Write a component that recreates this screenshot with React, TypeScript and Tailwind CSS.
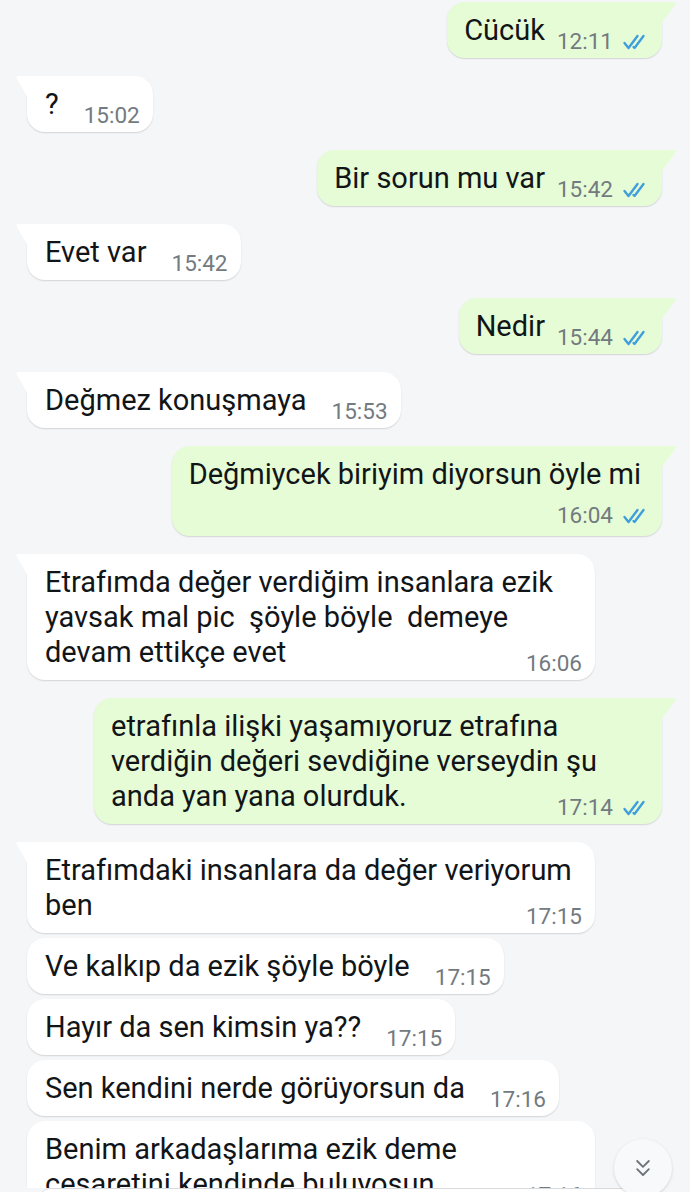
import React from 'react';
import { ChevronsDown } from 'lucide-react';

interface Message {
  out: boolean;
  lines: string[];
  time: string;
  tail: boolean;
  wide?: boolean;
  timeRow?: boolean;
}

const messages: Message[] = [
  { out: true, lines: ['Cücük'], time: '12:11', tail: true },
  { out: false, lines: ['?'], time: '15:02', tail: true },
  { out: true, lines: ['Bir sorun mu var'], time: '15:42', tail: true },
  { out: false, lines: ['Evet var'], time: '15:42', tail: true },
  { out: true, lines: ['Nedir'], time: '15:44', tail: true },
  { out: false, lines: ['Değmez konuşmaya'], time: '15:53', tail: true },
  { out: true, lines: ['Değmiycek biriyim diyorsun öyle mi'], time: '16:04', tail: true, timeRow: true },
  {
    out: false,
    lines: ['Etrafımda değer verdiğim insanlara ezik', 'yavsak mal pic\u00a0 şöyle böyle\u00a0 demeye', 'devam ettikçe evet'],
    time: '16:06',
    tail: true,
    wide: true,
  },
  {
    out: true,
    lines: ['etrafınla ilişki yaşamıyoruz etrafına', 'verdiğin değeri sevdiğine verseydin şu', 'anda yan yana olurduk.'],
    time: '17:14',
    tail: true,
    wide: true,
  },
  { out: false, lines: ['Etrafımdaki insanlara da değer veriyorum', 'ben'], time: '17:15', tail: true, wide: true },
  { out: false, lines: ['Ve kalkıp da ezik şöyle böyle'], time: '17:15', tail: false },
  { out: false, lines: ['Hayır da sen kimsin ya??'], time: '17:15', tail: false },
  { out: false, lines: ['Sen kendini nerde görüyorsun da'], time: '17:16', tail: false },
  { out: false, lines: ['Benim arkadaşlarıma ezik deme', 'cesaretini kendinde buluyosun'], time: '17:16', tail: false, wide: true },
];

function Ticks() {
  return (
    <svg width="28" height="16" viewBox="0 0 28 16" fill="none" stroke="#3f9fdc" strokeWidth="2.4" strokeLinecap="round" strokeLinejoin="round">
      <path d="M2.5 9 L6.5 14 L15.5 2" />
      <path d="M11.5 13 L12.5 14 L21.5 2" />
    </svg>
  );
}

function Time({ msg }: { msg: Message }) {
  return (
    <span className="flex items-center shrink-0">
      <span className="text-[22.5px] leading-[23px] text-[#737a80]">{msg.time}</span>
      {msg.out && (
        <span className="ml-[9px]">
          <Ticks />
        </span>
      )}
    </span>
  );
}

function Bubble({ msg }: { msg: Message }) {
  const body = msg.lines.slice(0, -1);
  const last = msg.lines[msg.lines.length - 1];

  return (
    <div
      className={`relative ${msg.wide ? 'w-[568px]' : ''} ${msg.out ? 'bg-[#e6fcd6] pl-[17px] pr-[12px]' : 'bg-white pl-[18px] pr-[13px]'} ${
        msg.tail ? (msg.out ? 'rounded-[18px] rounded-tr-none' : 'rounded-[18px] rounded-tl-none') : 'rounded-[18px]'
      } pt-[11px] shadow-[0_1px_1.5px_rgba(0,0,0,0.14)] ${msg.timeRow ? 'pb-[9px]' : 'pb-[5px]'}`}
    >
      {msg.tail && msg.out && (
        <svg className="absolute top-0 right-[-15px]" width="16" height="22" viewBox="0 0 16 22">
          <path d="M0 0 H12.5 Q16 0 14 3 L0 22 Z" fill="#e6fcd6" />
        </svg>
      )}
      {msg.tail && !msg.out && (
        <svg className="absolute top-0 left-[-12px]" width="13" height="22" viewBox="0 0 13 22">
          <path d="M13 0 H3.5 Q0 0 2 3 L13 22 Z" fill="#ffffff" />
        </svg>
      )}
      {body.map((line, i) => (
        <div key={i} className="leading-[35px] whitespace-pre">
          {line}
        </div>
      ))}
      {msg.timeRow ? (
        <>
          <div className="leading-[35px] whitespace-pre pr-[9px]">{last}</div>
          <div className="flex justify-end mt-[12px]">
            <Time msg={msg} />
          </div>
        </>
      ) : (
        <div className={`flex items-end justify-between ${msg.out ? 'gap-[12px]' : 'gap-[25px]'}`}>
          <span className="leading-[35px] mb-[5px] whitespace-pre">{last}</span>
          <Time msg={msg} />
        </div>
      )}
    </div>
  );
}

export default function App() {
  return (
    <div className="relative h-[1192px] w-[690px] overflow-hidden bg-[#f5f6f8] flex flex-col font-['Roboto',sans-serif] text-[29px] text-[#121517]">
      <div className="flex-1 overflow-hidden pt-[2px]">
        {messages.map((msg, i) => (
          <div
            key={i}
            className={`flex ${msg.out ? 'justify-end pr-[28px]' : 'justify-start pl-[27px]'} ${
              i === 0 ? '' : msg.tail ? 'mt-[18px]' : 'mt-[5px]'
            }`}
          >
            <Bubble msg={msg} />
          </div>
        ))}
      </div>

      {/* input bar peeking in at the bottom edge */}
      <div className="h-[4px] shrink-0 pl-[40px] pr-[43px]">
        <div className="h-[10px] rounded-t-[24px] bg-white border-t border-[#d7d9dc]" />
      </div>

      {/* scroll to bottom */}
      <div className="absolute left-[614px] top-[1139px] w-[58px] h-[58px] rounded-full bg-[#f8f9fa] shadow-[0_1px_3px_rgba(0,0,0,0.15)] flex items-center justify-center">
        <ChevronsDown size={28} strokeWidth={1.6} className="text-[#6d747a]" />
      </div>
    </div>
  );
}
